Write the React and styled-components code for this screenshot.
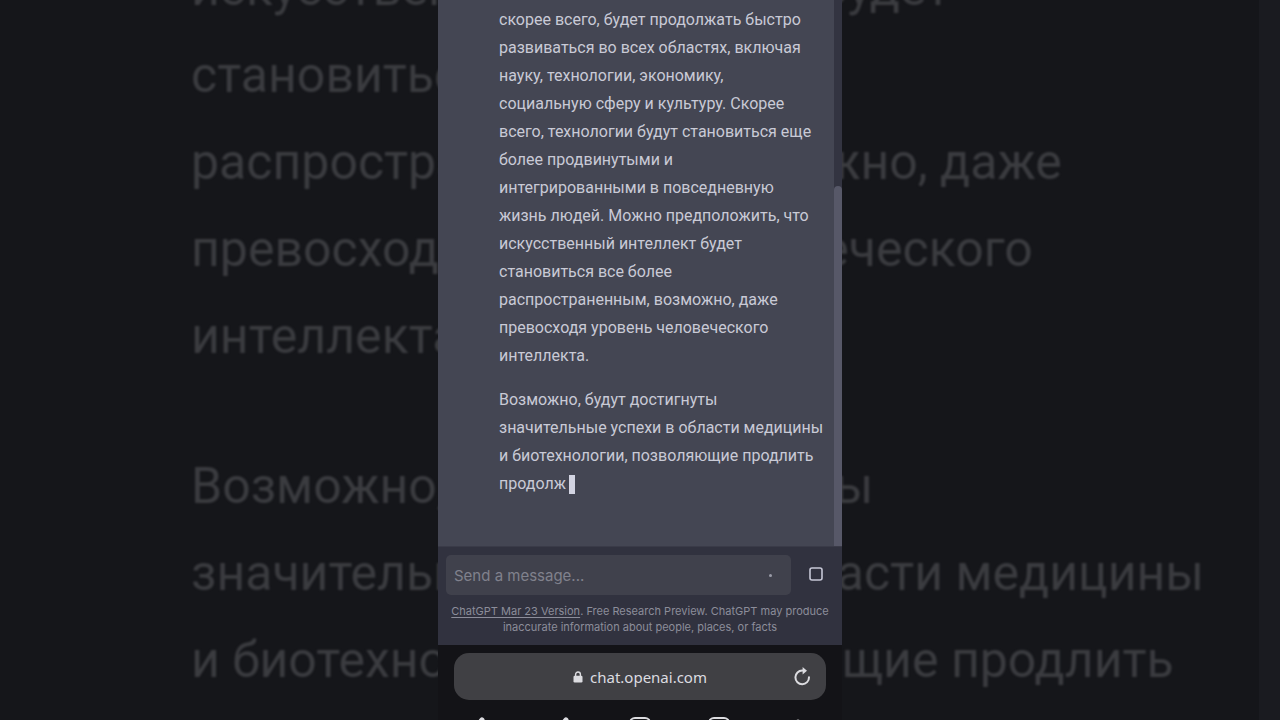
import styled, { createGlobalStyle } from 'styled-components';

const colors = {
  page: '#15161a',
  chat: '#444653',
  composer: '#31323f',
  field: '#40414c',
  text: '#c9cad6',
  muted: '#8c8d9a',
  browser: '#131317',
  address: '#404044',
  icon: '#dcdce0',
};

const future = [
  'через 1000 лет человеческая роль в мире,',
  'скорее всего, будет продолжать быстро',
  'развиваться во всех областях, включая',
  'науку, технологии, экономику,',
  'социальную сферу и культуру. Скорее',
  'всего, технологии будут становиться еще',
  'более продвинутыми и',
  'интегрированными в повседневную',
  'жизнь людей. Можно предположить, что',
  'искусственный интеллект будет',
  'становиться все более',
  'распространенным, возможно, даже',
  'превосходя уровень человеческого',
  'интеллекта.',
];

const medicine = [
  'Возможно, будут достигнуты',
  'значительные успехи в области медицины',
  'и биотехнологии, позволяющие продлить',
  'продолж',
];

function Lines({ lines, children }) {
  return lines.map((line, index) => (
    <Line key={line}>
      {line}
      {index === lines.length - 1 && children}
    </Line>
  ));
}

/**
 * Enlarged, dimmed copy of the answer shown behind the phone.
 */
function Backdrop() {
  return (
    <BackdropContainer aria-hidden="true">
      <BackdropText>
        <p>
          <Lines lines={future.slice(9)} />
        </p>
        <p>
          <Lines lines={medicine} />
        </p>
      </BackdropText>
      <BackdropEdge />
    </BackdropContainer>
  );
}

function Chat() {
  return (
    <ChatContainer>
      <Message>
        <p>
          <Lines lines={future} />
        </p>
        <p>
          <Lines lines={medicine}>
            <Cursor />
          </Lines>
        </p>
      </Message>
      <ScrollTrack>
        <ScrollThumb />
      </ScrollTrack>
    </ChatContainer>
  );
}

function Composer() {
  return (
    <ComposerContainer>
      <ComposerRow>
        <Field>
          <FieldInput aria-label="Send a message" placeholder="Send a message..." />
          <Dot />
        </Field>
        <StopButton type="button" aria-label="Stop generating">
          <svg width="16" height="16" viewBox="0 0 16 16" fill="none">
            <rect x="2" y="1" width="12" height="12" rx="2" stroke="currentColor" strokeWidth="1.6" />
          </svg>
        </StopButton>
      </ComposerRow>
      <Notice>
        <NoticeLink href="#release-notes">ChatGPT Mar 23 Version</NoticeLink>. Free Research Preview.
        ChatGPT may produce inaccurate information about people, places, or facts
      </Notice>
    </ComposerContainer>
  );
}

function Browser() {
  return (
    <BrowserContainer>
      <AddressBar>
        <Address href="#site">
          <LockIcon />
          chat.openai.com
        </Address>
        <ReloadButton type="button" aria-label="Reload">
          <ReloadIcon />
        </ReloadButton>
      </AddressBar>
      <Toolbar>
        <ToolButton type="button" aria-label="Back">
          <ArrowIcon tip={12} />
        </ToolButton>
        <ToolButton type="button" aria-label="Forward">
          <ArrowIcon tip={17} />
        </ToolButton>
        <ToolButton type="button" aria-label="Home">
          <SquareIcon />
        </ToolButton>
        <ToolButton type="button" aria-label="Tabs">
          <SquareIcon />
        </ToolButton>
        <ToolButton type="button" aria-label="Menu">
          <svg width="24" height="24" viewBox="0 0 24 24" fill="currentColor">
            <circle cx="12" cy="4.5" r="2" />
            <circle cx="12" cy="11" r="2" />
            <circle cx="12" cy="17.5" r="2" />
          </svg>
        </ToolButton>
      </Toolbar>
    </BrowserContainer>
  );
}

function LockIcon() {
  return (
    <svg width="10" height="12" viewBox="0 0 10 12" fill="none">
      <rect x="0.5" y="4.8" width="9" height="6.7" rx="1.2" fill="currentColor" />
      <path d="M2.6 5.2V3.4A2.4 2.4 0 0 1 7.4 3.4V5.2" stroke="currentColor" strokeWidth="1.4" />
    </svg>
  );
}

function ReloadIcon() {
  return (
    <svg width="20" height="20" viewBox="0 0 20 20" fill="none">
      <path
        d="M11.5 3.6H10.4A6.8 6.8 0 1 0 17 10.2"
        stroke="currentColor"
        strokeWidth="2"
        strokeLinecap="round"
      />
      <path d="M10.6 0L15 3.7L10.6 7.4Z" fill="currentColor" />
    </svg>
  );
}

function ArrowIcon({ tip }) {
  return (
    <svg width="24" height="24" viewBox="0 0 24 24" fill="none">
      <path
        d={`M${tip} 3V18M${tip} 3L${tip - 6} 10`}
        stroke="currentColor"
        strokeWidth="5"
        strokeLinecap="round"
        strokeLinejoin="round"
      />
    </svg>
  );
}

function SquareIcon() {
  return (
    <svg width="24" height="24" viewBox="0 0 24 24" fill="none">
      <rect x="2" y="1" width="20" height="20" rx="5" stroke="currentColor" strokeWidth="2" />
    </svg>
  );
}

export default function App() {
  return (
    <>
      <GlobalStyle />
      <Stage>
        <Backdrop />
        <Phone>
          <Chat />
          <Composer />
          <Browser />
        </Phone>
      </Stage>
    </>
  );
}

const GlobalStyle = createGlobalStyle`
  * {
    box-sizing: border-box;
  }

  body {
    margin: 0;
    background: ${colors.page};
    font-family: Roboto, sans-serif;
  }

  p {
    margin: 0;
  }

  button {
    display: flex;
    align-items: center;
    justify-content: center;
    padding: 0;
    border: none;
    background: none;
    cursor: pointer;
  }
`;

const Stage = styled.main`
  display: grid;
  grid-template: 100vh / 100%;
  overflow: hidden;
`;

const BackdropContainer = styled.div`
  grid-area: 1 / 1;
  display: flex;
  justify-content: space-between;
  overflow: hidden;
`;

const BackdropText = styled.div`
  display: flex;
  flex-direction: column;
  justify-content: center;
  gap: 63px;
  padding: 16px 0 0 191px;
  color: #3b3c40;
  font-size: 50px;
  line-height: 87px;
  white-space: nowrap;
  filter: blur(1px);
`;

const BackdropEdge = styled.div`
  width: 21px;
  background: #1a1b20;
`;

const Phone = styled.div`
  grid-area: 1 / 1;
  z-index: 1;
  justify-self: center;
  display: flex;
  flex-direction: column;
  width: min(100%, 404px);
  overflow: hidden;
`;

const ChatContainer = styled.section`
  display: flex;
  flex: 1;
  min-height: 0;
  background: ${colors.chat};
`;

const Message = styled.article`
  display: flex;
  flex: 1;
  flex-direction: column;
  justify-content: flex-end;
  gap: 16px;
  padding: 0 0 48px 61px;
  overflow: hidden;
  color: ${colors.text};
  font-size: 16px;
  line-height: 28px;
  white-space: nowrap;
`;

const Line = styled.span`
  display: block;
`;

const Cursor = styled.span`
  display: inline-block;
  width: 6px;
  height: 19px;
  margin-left: 3px;
  background: #d3d4e2;
  vertical-align: middle;
`;

const ScrollTrack = styled.div`
  display: flex;
  flex-direction: column;
  justify-content: flex-end;
  width: 8px;
  background: #333441;
`;

const ScrollThumb = styled.div`
  height: 66%;
  border-radius: 4px 4px 0 0;
  background: #575868;
`;

const ComposerContainer = styled.section`
  padding: 8px 8px 10px;
  border-top: 1px solid #3a3b48;
  background: ${colors.composer};
`;

const ComposerRow = styled.div`
  display: flex;
  gap: 6px;
`;

const Field = styled.div`
  display: flex;
  flex: 1;
  align-items: center;
  height: 40px;
  padding: 0 19px 0 8px;
  border-radius: 5px;
  background: ${colors.field};
`;

const FieldInput = styled.input`
  flex: 1;
  min-width: 0;
  padding: 0;
  border: none;
  outline: none;
  color: ${colors.text};
  background: none;
  font-family: Inter, sans-serif;
  font-size: 15px;

  &::placeholder {
    color: #80818d;
    opacity: 1;
  }
`;

const Dot = styled.span`
  width: 3px;
  height: 3px;
  border-radius: 50%;
  background: #9a9ba8;
`;

const StopButton = styled.button`
  width: 37px;
  color: #c6c7d6;
`;

const Notice = styled.p`
  padding-top: 8px;
  color: ${colors.muted};
  font-family: Inter, sans-serif;
  font-size: 11px;
  line-height: 16px;
  text-align: center;
`;

const NoticeLink = styled.a`
  color: inherit;
  text-underline-offset: 2px;
`;

const BrowserContainer = styled.footer`
  padding-top: 8px;
  background: ${colors.browser};
`;

const AddressBar = styled.div`
  display: grid;
  grid-template-columns: 32px 1fr 32px;
  align-items: center;
  height: 47px;
  margin: 0 16px;
  padding: 0 8px;
  border-radius: 15px;
  background: ${colors.address};
`;

const Address = styled.a`
  grid-column: 2;
  display: flex;
  align-items: center;
  justify-content: center;
  gap: 7px;
  color: ${colors.icon};
  font-family: 'Noto Sans', sans-serif;
  font-size: 15px;
  text-decoration: none;
`;

const ReloadButton = styled.button`
  height: 32px;
  color: ${colors.icon};
`;

const Toolbar = styled.nav`
  display: grid;
  grid-template-columns: repeat(5, 1fr);
  align-items: start;
  height: 20px;
  padding: 17px 5px 0;
  overflow: hidden;
`;

const ToolButton = styled.button`
  color: ${colors.icon};
`;
